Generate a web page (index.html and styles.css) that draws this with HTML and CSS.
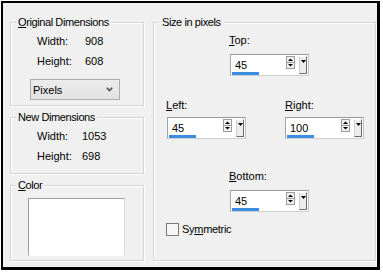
FILE: index.html
```html
<!DOCTYPE html>
<html>
<head>
<meta charset="utf-8">
<link rel="stylesheet" href="styles.css">
</head>
<body>
<div class="frame">
  <div class="col-left">
    <fieldset class="grp g1">
      <legend><u>O</u>riginal Dimensions</legend>
      <div class="dims">
        <span>Width:</span><span>908</span>
        <span>Height:</span><span>608</span>
      </div>
      <div class="select">
        <span>Pixels</span>
        <svg class="chev" width="7" height="5" viewBox="0 0 7 5"><path d="M0.8 0.8L3.5 3.6L6.2 0.8" fill="none" stroke="#505050" stroke-width="1.6"/></svg>
      </div>
    </fieldset>
    <fieldset class="grp g2">
      <legend>New Dimensions</legend>
      <div class="dims dims-new">
        <span>Width:</span><span>1053</span>
        <span>Height:</span><span>698</span>
      </div>
    </fieldset>
    <fieldset class="grp g3">
      <legend><u>C</u>olor</legend>
      <div class="swatch"></div>
    </fieldset>
  </div>

  <fieldset class="grp gsize">
    <legend>Size in pixels</legend>

    <div class="field f-top">
      <div class="lbl"><u>T</u>op:</div>
      <div class="spin">
        <span class="val">45</span>
        <svg class="arrows" width="9" height="13" viewBox="0 0 9 13"><rect x="0.5" y="0.5" width="8" height="6" fill="#f2f2f2" stroke="#9c9c9c"/><rect x="0.5" y="6.5" width="8" height="6" fill="#f2f2f2" stroke="#9c9c9c"/><path d="M2 5H7L4.5 2.5Z" fill="#000"/><path d="M2 8H7L4.5 10.5Z" fill="#000"/></svg>
        <span class="drop"><svg width="5" height="3" viewBox="0 0 5 3"><path d="M0 0H5L2.5 3Z" fill="#000"/></svg></span>
        <span class="bar"></span>
      </div>
    </div>

    <div class="lr">
      <div class="field f-left">
        <div class="lbl"><u>L</u>eft:</div>
        <div class="spin">
          <span class="val">45</span>
          <svg class="arrows" width="9" height="13" viewBox="0 0 9 13"><rect x="0.5" y="0.5" width="8" height="6" fill="#f2f2f2" stroke="#9c9c9c"/><rect x="0.5" y="6.5" width="8" height="6" fill="#f2f2f2" stroke="#9c9c9c"/><path d="M2 5H7L4.5 2.5Z" fill="#000"/><path d="M2 8H7L4.5 10.5Z" fill="#000"/></svg>
          <span class="drop"><svg width="5" height="3" viewBox="0 0 5 3"><path d="M0 0H5L2.5 3Z" fill="#000"/></svg></span>
          <span class="bar"></span>
        </div>
      </div>
      <div class="field f-right">
        <div class="lbl"><u>R</u>ight:</div>
        <div class="spin">
          <span class="val">100</span>
          <svg class="arrows" width="9" height="13" viewBox="0 0 9 13"><rect x="0.5" y="0.5" width="8" height="6" fill="#f2f2f2" stroke="#9c9c9c"/><rect x="0.5" y="6.5" width="8" height="6" fill="#f2f2f2" stroke="#9c9c9c"/><path d="M2 5H7L4.5 2.5Z" fill="#000"/><path d="M2 8H7L4.5 10.5Z" fill="#000"/></svg>
          <span class="drop"><svg width="5" height="3" viewBox="0 0 5 3"><path d="M0 0H5L2.5 3Z" fill="#000"/></svg></span>
          <span class="bar"></span>
        </div>
      </div>
    </div>

    <div class="field f-bottom">
      <div class="lbl"><u>B</u>ottom:</div>
      <div class="spin">
        <span class="val">45</span>
        <svg class="arrows" width="9" height="13" viewBox="0 0 9 13"><rect x="0.5" y="0.5" width="8" height="6" fill="#f2f2f2" stroke="#9c9c9c"/><rect x="0.5" y="6.5" width="8" height="6" fill="#f2f2f2" stroke="#9c9c9c"/><path d="M2 5H7L4.5 2.5Z" fill="#000"/><path d="M2 8H7L4.5 10.5Z" fill="#000"/></svg>
        <span class="drop"><svg width="5" height="3" viewBox="0 0 5 3"><path d="M0 0H5L2.5 3Z" fill="#000"/></svg></span>
        <span class="bar"></span>
      </div>
    </div>

    <div class="check"><span class="cbox"></span><span class="check-text">Sy<u>m</u>metric</span></div>
  </fieldset>
</div>
</body>
</html>
```

FILE: styles.css
```css
html, body {
  margin: 0;
  padding: 0;
  background: #ffffff;
}

body {
  font-family: "Liberation Sans", Arial, sans-serif;
  font-size: 11px;
  color: #000;
}

.frame {
  box-sizing: border-box;
  width: 379px;
  height: 269px;
  margin: 1px 0 0 1px;
  border-style: solid;
  border-color: #000;
  border-width: 2px 3px 3px 2px;
  background: #f0f0f0;
  display: grid;
  grid-template-columns: 134px 223px;
  column-gap: 9px;
  padding: 12px 1px 6px 7px;
  align-items: stretch;
}

.col-left {
  display: flex;
  flex-direction: column;
  gap: 4px;
}

.grp {
  margin: 0;
  min-width: 0;
  border: 1px solid #d5d5d5;
  box-shadow: 1px 1px 0 #ffffff, inset 1px 1px 0 #ffffff;
  padding: 0 0 0 5px;
}

.grp legend {
  padding: 0 2px;
  line-height: 14px;
  letter-spacing: -0.4px;
  background: #f0f0f0;
}

.g1 { padding-bottom: 5px; }
.g2 { padding-bottom: 7px; }
.g3 { padding-bottom: 4px; }

.dims {
  display: grid;
  grid-template-columns: 48px auto;
  line-height: 20px;
  margin: 2px 0 0 21px;
}

.dims-new {
  grid-template-columns: 45px auto;
}

.select {
  box-sizing: border-box;
  width: 90px;
  height: 21px;
  margin: 8px 0 0 14px;
  border: 1px solid #adadad;
  background: linear-gradient(#ececec, #e2e2e2);
  display: flex;
  align-items: center;
  justify-content: space-between;
  padding: 0 6px 0 2px;
}

.chev { display: block; }

.swatch {
  box-sizing: border-box;
  width: 97px;
  height: 58px;
  margin: 6px 0 0 12px;
  background: #fff;
  border-style: solid;
  border-width: 1px;
  border-color: #a0a0a0 #d9d9d9 #ffffff #a0a0a0;
}

.gsize {
  padding-left: 5px;
}

.gsize legend {
  padding: 0 3px;
}

.lbl {
  line-height: 14px;
}

.field .spin {
  margin-left: 1px;
}

.f-top {
  margin: 4px 0 0 70px;
}
.f-top .spin { margin-top: 7px; }

.lr {
  display: flex;
  gap: 39px;
  margin: 22px 0 0 7px;
}
.lr .spin { margin-top: 5px; }
.f-right .spin { margin-left: 0; }

.f-bottom {
  margin: 30px 0 0 70px;
}
.f-bottom .spin { margin-top: 7px; }

.spin {
  box-sizing: border-box;
  width: 79px;
  height: 22px;
  background: #fff;
  border-style: solid;
  border-width: 1px;
  border-color: #9a9a9a #c4c4c4 #cfcfcf #a5a5a5;
  display: grid;
  grid-template-columns: 1fr 9px 8px;
  grid-template-rows: 17px 3px;
  column-gap: 4px;
  padding-right: 1px;
}

.val {
  grid-column: 1;
  grid-row: 1;
  align-self: center;
  padding: 2px 0 0 4px;
  line-height: 14px;
}

.arrows {
  grid-column: 2;
  grid-row: 1;
  display: block;
  margin-top: 1px;
}

.drop {
  grid-column: 3;
  grid-row: 1 / span 2;
  box-sizing: border-box;
  height: 18px;
  margin-top: 1px;
  background: #ededed;
  border-style: solid;
  border-width: 1px;
  border-color: #ffffff #6a6a6a #6a6a6a #d0d0d0;
  display: flex;
  justify-content: center;
  padding-top: 3px;
}

.drop svg { display: block; }

.bar {
  grid-column: 1;
  grid-row: 2;
  width: 27px;
  margin-left: 1px;
  background: #3a8de0;
}

.check {
  display: flex;
  align-items: center;
  gap: 3px;
  line-height: 14px;
  margin: 10px 0 0 7px;
}

.check-text {
  letter-spacing: -0.3px;
}

.cbox {
  box-sizing: border-box;
  width: 13px;
  height: 13px;
  border: 1px solid #7a7a7a;
  background: #f7f7f7;
}
```
